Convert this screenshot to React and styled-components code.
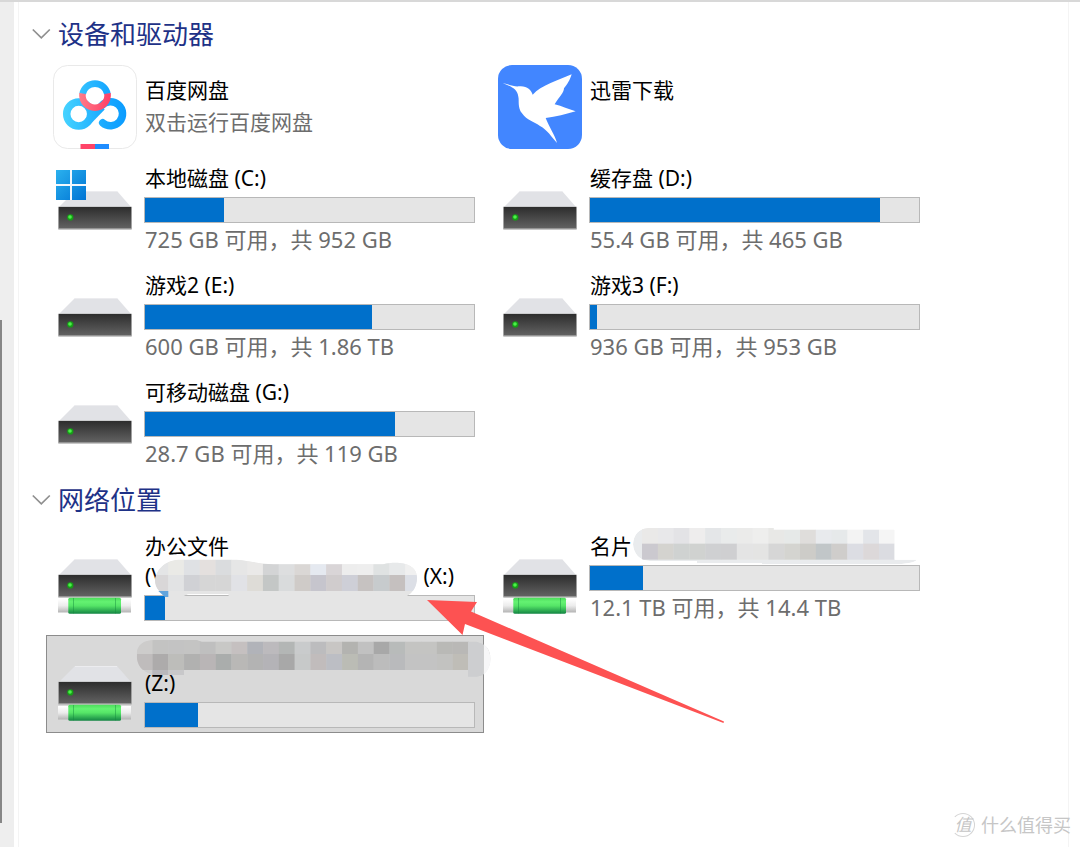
/**
*
* This PC: drives and network locations
*
*/

import React, { useState } from 'react';
import styled, { createGlobalStyle } from 'styled-components';

const GlobalStyle = createGlobalStyle`
  * {
    box-sizing: border-box;
  }

  body {
    margin: 0;
    background-color: #ffffff;
    font-family: 'Noto Sans', 'Noto Sans CJK SC', sans-serif;
  }
`;

const Page = styled.div`
  position: relative;
  display: flex;
  min-height: 100vh;
  border-top: 2px solid #d8d8d8;
  overflow: hidden;
`;

const Rail = styled.div`
  display: flex;
  flex-direction: column;
  width: 14px;
  background-color: #eeeeee;
`;

const RailSpace = styled.div`
  flex: ${props => props.$grow};
`;

const Thumb = styled.div`
  flex: 503;
  width: 2px;
  background-color: #868686;
`;

const Pane = styled.main`
  flex: 1;
  margin: 0 11px 0 4px;
  padding: 13px 0 0 13px;
  border-left: 1px solid #f4f4f4;
  border-right: 1px solid #f4f4f4;
`;

const Section = styled.section`
  margin-bottom: 9px;
`;

const Heading = styled.h2`
  margin: 0 0 9px;
  font-weight: 400;
`;

const Toggle = styled.button`
  display: flex;
  align-items: center;
  gap: 7px;
  height: 38px;
  padding: 0;
  border: 0;
  background: none;
  color: #1e3287;
  font-family: inherit;
  font-size: 26px;
  line-height: 38px;
  cursor: pointer;
`;

const Grid = styled.ul`
  display: grid;
  grid-template-columns: repeat(auto-fill, 438px);
  gap: 9px 7px;
  margin: 0 0 0 14px;
  padding: 0;
  list-style: none;
`;

const Tile = styled.li`
  position: relative;
  display: flex;
  align-items: flex-start;
  gap: 7px;
  min-height: ${props => (props.$app ? '89px' : '98px')};
  padding: ${props => (props.$app ? '3px 9px 0 7px' : '3px 9px 0 7px')};
  background-color: ${props => (props.$selected ? '#d9d9d9' : 'transparent')};
  box-shadow: ${props => (props.$selected ? 'inset 0 0 0 1px #8c8c8c' : 'none')};
`;

const Icon = styled.svg`
  flex: none;
  margin-top: ${props => (props.$drive ? '5px' : '0')};
`;

const Body = styled.div`
  flex: 1;
  min-width: 0;
  padding-top: ${props => (props.$app ? '10px' : '0')};
`;

const Name = styled.div`
  display: flex;
  justify-content: space-between;
  height: 30px;
  padding: 0 21px 0 1px;
  color: #000000;
  font-size: 21px;
  line-height: 30px;
  white-space: nowrap;
`;

const Note = styled.div`
  padding: 2px 0 0 1px;
  color: #6d6d6d;
  font-size: 21px;
  line-height: 30px;
`;

const Space = styled.div`
  height: 30px;
  padding-left: 1px;
  color: #6d6d6d;
  font-size: 22px;
  line-height: 30px;
  white-space: nowrap;
`;

const Bar = styled.div`
  height: 26px;
  margin: 4px 0 1px;
  border: 1px solid #b8b8b8;
  background-color: #e5e5e5;
`;

const Fill = styled.div`
  height: 100%;
  background-color: #0070cb;
`;

const Cover = styled.svg`
  position: absolute;
  left: ${props => props.$left}px;
  top: ${props => props.$top}px;
`;

const Arrow = styled.svg`
  position: absolute;
  left: 427px;
  top: 598px;
`;

const Watermark = styled.div`
  position: absolute;
  right: 9px;
  bottom: 9px;
  display: flex;
  align-items: center;
  gap: 6px;
  color: #c6c6c6;
  font-size: 18px;
  line-height: 26px;
`;

const Seal = styled.span`
  width: 24px;
  height: 24px;
  border: 1px solid #d4d4d4;
  border-left-color: transparent;
  border-radius: 50%;
  font-size: 17px;
  font-style: italic;
  line-height: 21px;
  text-align: center;
`;

function Chevron() {
  return (
    <svg width="19" height="12" viewBox="0 0 19 12" fill="none" aria-hidden="true">
      <path d="M0.8 1.5 L9.3 9.8 L17.8 1.5" stroke="#8f8f8f" strokeWidth="1.7" />
    </svg>
  );
}

function BaiduIcon() {
  return (
    <Icon width="84" height="84" viewBox="0 0 84 84" fill="none" aria-hidden="true">
      <defs>
        <linearGradient id="panBlue" gradientUnits="userSpaceOnUse" x1="10" y1="0" x2="74" y2="0">
          <stop offset="0" stopColor="#46d3ff" />
          <stop offset="0.65" stopColor="#1aaaff" />
          <stop offset="1" stopColor="#0a9bff" />
        </linearGradient>
        <linearGradient id="panRed" gradientUnits="userSpaceOnUse" x1="26" y1="30" x2="58" y2="34">
          <stop offset="0" stopColor="#ff7d8a" />
          <stop offset="1" stopColor="#ff3f66" />
        </linearGradient>
      </defs>
      <rect x="0.5" y="0.5" width="83" height="83" rx="14" fill="#fff" stroke="#e9e9e9" />
      <g stroke="url(#panBlue)" strokeWidth="7.5">
        <circle cx="25.7" cy="49" r="12" />
        <path d="M34 57.5 L49 42" />
        <path d="M48.6 40.7 A12 12 0 1 1 49.7 57.8" strokeLinecap="round" />
        <path d="M29.6 29 A12.6 12.6 0 0 1 54.4 29" strokeWidth="6.6" />
      </g>
      <path d="M29.5 28.5 A12.6 12.6 0 1 0 54.5 28.5" stroke="url(#panRed)" strokeWidth="6.6" />
      <path d="M27.5 79 H42 V84 H27.5z" fill="#ff4468" />
      <path d="M42 79 H56 V84 H42z" fill="#1f8dff" />
    </Icon>
  );
}

function ThunderIcon() {
  return (
    <Icon width="84" height="84" viewBox="54 45 252 252" aria-hidden="true">
      <rect x="54" y="45" width="252" height="252" rx="42" fill="#4286ff" />
      <path
        fill="#fff"
        d="M68 99 C88 104 102 111 118 109 C140 107 154 120 158 134 C184 106 232 92 275 73
          C269 92 262 103 252 115 C252 128 238 140 224 163 C246 169 266 177 287 184
          C258 192 228 201 197 204 C207 231 225 255 231 279 C214 260 202 240 180 228
          C160 214 142 212 126 190 C112 172 118 152 115 140 C112 118 98 112 68 99z"
      />
    </Icon>
  );
}

function DriveIcon({ windows, network }) {
  return (
    <Icon $drive width="84" height="84" viewBox="0 0 84 84" aria-hidden="true">
      <defs>
        <linearGradient id="driveFront" x1="0" y1="0" x2="0" y2="1">
          <stop offset="0" stopColor="#2d2d2d" />
          <stop offset="1" stopColor="#626262" />
        </linearGradient>
        <linearGradient id="winLogo" gradientUnits="userSpaceOnUse" x1="3" y1="2" x2="33" y2="32">
          <stop offset="0" stopColor="#2bb1ee" />
          <stop offset="1" stopColor="#0074d4" />
        </linearGradient>
        <linearGradient id="tube" x1="0" y1="0" x2="0" y2="1">
          <stop offset="0" stopColor="#ffffff" />
          <stop offset="0.5" stopColor="#ececec" />
          <stop offset="1" stopColor="#b4b4b4" />
        </linearGradient>
        <linearGradient id="plug" x1="0" y1="0" x2="0" y2="1">
          <stop offset="0" stopColor="#4ddd5c" />
          <stop offset="0.25" stopColor="#64f272" />
          <stop offset="0.5" stopColor="#55e567" />
          <stop offset="1" stopColor="#138443" />
        </linearGradient>
      </defs>
      <path d="M22 23 H64 L78 39 H6z" fill="#e1e2e6" />
      <path d="M22 23.5 H64" stroke="#ececef" />
      <rect x="5" y="38.6" width="74" height="23.2" rx="1" fill="#b5b5b5" />
      <rect x="5.8" y="39" width="72.4" height="21.4" fill="url(#driveFront)" />
      <circle cx="17.3" cy="49.4" r="3.1" fill="#169f16" />
      <circle cx="17" cy="49" r="1.8" fill="#4df04a" />
      {network && (
        <g>
          <rect x="5" y="63" width="73" height="13.5" fill="url(#tube)" />
          <rect x="15.3" y="61.8" width="52.7" height="16" rx="1.5" fill="url(#plug)" />
          <path d="M20.5 62 V77.5 M62.5 62 V77.5" stroke="#128a3c" strokeOpacity="0.45" />
        </g>
      )}
      {windows && (
        <g>
          <rect x="3" y="2" width="30" height="30" fill="#f2f8fd" />
          <path
            fill="url(#winLogo)"
            d="M3 2 H17 V16 H3z M19 2 H33 V16 H19z M3 18 H17 V32 H3z M19 18 H33 V32 H19z"
          />
        </g>
      )}
    </Icon>
  );
}

// Blocks that hide the private part of a network name.
function Mosaic({ id, left, top, width, height, viewBox, shape, base, rows, children }) {
  return (
    <Cover $left={left} $top={top} width={width} height={height} viewBox={viewBox} aria-hidden="true">
      <clipPath id={id}>
        <path d={shape} />
      </clipPath>
      <g clipPath={`url(#${id})`}>
        <path d={shape} fill={base} />
        {rows.map(row => (
          row.colors.split(' ').map((color, i) => (
            <rect
              key={row.y + '-' + i}
              x={row.x + i * 47.4}
              y={row.y}
              width="48"
              height={row.h}
              fill={'#' + color}
            />
          ))
        ))}
      </g>
      {children}
    </Cover>
  );
}

function OfficeMosaic() {
  return (
    <Mosaic
      id="officeMosaic"
      left={108}
      top={31}
      width={264}
      height={39}
      viewBox="342 102 792 117"
      base="#e5e5e5"
      shape="M345 165 C350 125 385 103 425 104 H590 C630 108 660 117 700 118 H1030 C1070 108 1131 112 1131 158
        C1131 185 1118 205 1100 214 H565 V208 H445 L430 214 H385 C360 205 345 190 345 165z"
      rows={[
        { x: 337, y: 102, h: 48, colors: 'e4e5e6 eaeae6 dfe1e4 e4e0de dadcde e6e6e6 eae9e8 d3d4d5 dddedf dad7d5 e5e9f0 d9d5d7 ededed eeeeee dfe2e2 e7e9ea f0f0f0' },
        { x: 337, y: 150, h: 48, colors: 'd9d7d8 e2e3e4 d0d1d5 d6d6d6 d6d6d6 e1e2e6 dedcd7 c4c7c6 d9dbdc cfcbc8 c6c5cd d0cccd cecfd7 c6c2c1 c7cbcd c5c0bf dcdfe6' },
      ]}
    >
      <path d="M355 198 H385 V216 H375z" fill="#63a5dc" />
    </Mosaic>
  );
}

function CardMosaic() {
  return (
    <Mosaic
      id="cardMosaic"
      left={141}
      top={-1}
      width={286}
      height={38}
      viewBox="425 20 858 114"
      base="#e9ebed"
      shape="M428 72 C430 42 446 24 475 23 H850 V28 H1212 V118 H1280 C1270 128 1240 132 1200 132 H815 V129 H620
        V122 H480 C446 122 430 100 428 72z"
      rows={[
        { x: 455, y: 20, h: 51, colors: 'eae9e8 e8e8ea e3e3e6 eeeded e4e6e8 e9ebeb ebebea eeeeed e8e8e6 e6e9e8 dfdddb e8eaed e6e9ea f3f3f3 e3e5e9 f5f5f5' },
        { x: 455, y: 70, h: 48, colors: 'cbc9cf d4d3cf cfd2d1 d0d2d0 cfd0d2 cfcfd1 e4e4e4 e4e4e3 d6d6d6 d4d4d0 cdccc8 c1c6c8 cfcdcb dcdde3 dcd8d9 dbdce1' },
      ]}
    />
  );
}

function SelectedMosaic() {
  return (
    <Mosaic
      id="selectedMosaic"
      left={90}
      top={4}
      width={356}
      height={39}
      viewBox="288 42 1068 117"
      base="#cfcfcf"
      shape="M290 90 C290 60 310 45 345 45 H470 L485 50 H1300 C1335 52 1352 70 1352 102 C1350 135 1330 155 1310 155
        H1284 V135 H432 V150 H337 C305 140 290 120 290 90z"
      rows={[
        { x: 290, y: 42, h: 45, colors: 'cdcccb c3c3c2 c3c3c3 c4c4c3 bfbfbf c8c8c6 c5c0c0 b1b3b9 bcbabd b3b6b5 c9cbcc bcbcbe c8c6c4 b3b3b0 c1c1c1 a8a8a8 b8bbba c4c4c2 c4c4c2 b9b9b6 b9b8b6' },
        { x: 290, y: 87, h: 48, colors: 'bfbcbc adabab bdbdba b1b1b0 b9b5b6 aaadac b9b8b6 b3b3b3 b4b3b7 a8a8a8 c7c9c9 c1bcbc bcbec4 bbbcb5 b4b4b4 bcbcbc b9babc c3c3c3 c3c3c3 c2c2c0 bfbdb7' },
        { x: 337, y: 135, h: 15, colors: 'b9b8bc c8c8ca' },
      ]}
    >
      <path d="M1284 50 H1310 L1330 58 V150 L1310 155 H1284z" fill="#cdced0" />
      <path d="M1332 58 C1358 80 1358 125 1332 148z" fill="#f7f7f8" />
    </Mosaic>
  );
}

function Usage({ label, percent }) {
  return (
    <Bar role="meter" aria-label={label} aria-valuemin={0} aria-valuemax={100} aria-valuenow={percent}>
      <Fill style={{ width: percent + '%' }} />
    </Bar>
  );
}

function Drive({ name, percent, space, windows, network, children }) {
  return (
    <Tile>
      <DriveIcon windows={windows} network={network} />
      <Body>
        <Name>{name}</Name>
        <Usage label={name} percent={percent} />
        <Space>{space}</Space>
      </Body>
      {children}
    </Tile>
  );
}

function Group({ title, children }) {
  const [open, setOpen] = useState(true);

  return (
    <Section>
      <Heading>
        <Toggle type="button" aria-expanded={open} onClick={() => setOpen(!open)}>
          <Chevron />
          {title}
        </Toggle>
      </Heading>
      {open && <Grid>{children}</Grid>}
    </Section>
  );
}

const drives = [
  { name: '本地磁盘 (C:)', percent: 24, space: '725 GB 可用，共 952 GB', windows: true },
  { name: '缓存盘 (D:)', percent: 88, space: '55.4 GB 可用，共 465 GB' },
  { name: '游戏2 (E:)', percent: 69, space: '600 GB 可用，共 1.86 TB' },
  { name: '游戏3 (F:)', percent: 2, space: '936 GB 可用，共 953 GB' },
  { name: '可移动磁盘 (G:)', percent: 76, space: '28.7 GB 可用，共 119 GB' },
];

function App() {
  return (
    <Page>
      <GlobalStyle />
      <Rail>
        <RailSpace $grow={318} />
        <Thumb />
        <RailSpace $grow={24} />
      </Rail>
      <Pane>
        <Group title="设备和驱动器">
          <Tile $app>
            <BaiduIcon />
            <Body $app>
              <Name>百度网盘</Name>
              <Note>双击运行百度网盘</Note>
            </Body>
          </Tile>
          <Tile $app>
            <ThunderIcon />
            <Body $app>
              <Name>迅雷下载</Name>
            </Body>
          </Tile>
          {drives.map(drive => (
            <Drive key={drive.name} {...drive} />
          ))}
        </Group>
        <Group title="网络位置">
          <Tile>
            <DriveIcon network />
            <Body>
              <Name>办公文件</Name>
              <Name>
                <span>(\</span>
                <span>(X:)</span>
              </Name>
              <Usage label="办公文件 (X:)" percent={6} />
            </Body>
            <OfficeMosaic />
          </Tile>
          <Drive name="名片" percent={16} space="12.1 TB 可用，共 14.4 TB" network>
            <CardMosaic />
          </Drive>
          <Tile $selected>
            <DriveIcon network />
            <Body>
              <Name />
              <Name>(Z:)</Name>
              <Usage label="(Z:)" percent={16} />
            </Body>
            <SelectedMosaic />
          </Tile>
        </Group>
      </Pane>
      <Arrow width="298" height="124" viewBox="0 0 298 124" aria-hidden="true">
        <path d="M0 0 L50 2 L44 11.5 L297 121.5 L296.5 123 L38 24 L35.5 35z" fill="#fd5252" />
      </Arrow>
      <Watermark>
        <Seal>值</Seal>
        <span>什么值得买</span>
      </Watermark>
    </Page>
  );
}

export default App;
